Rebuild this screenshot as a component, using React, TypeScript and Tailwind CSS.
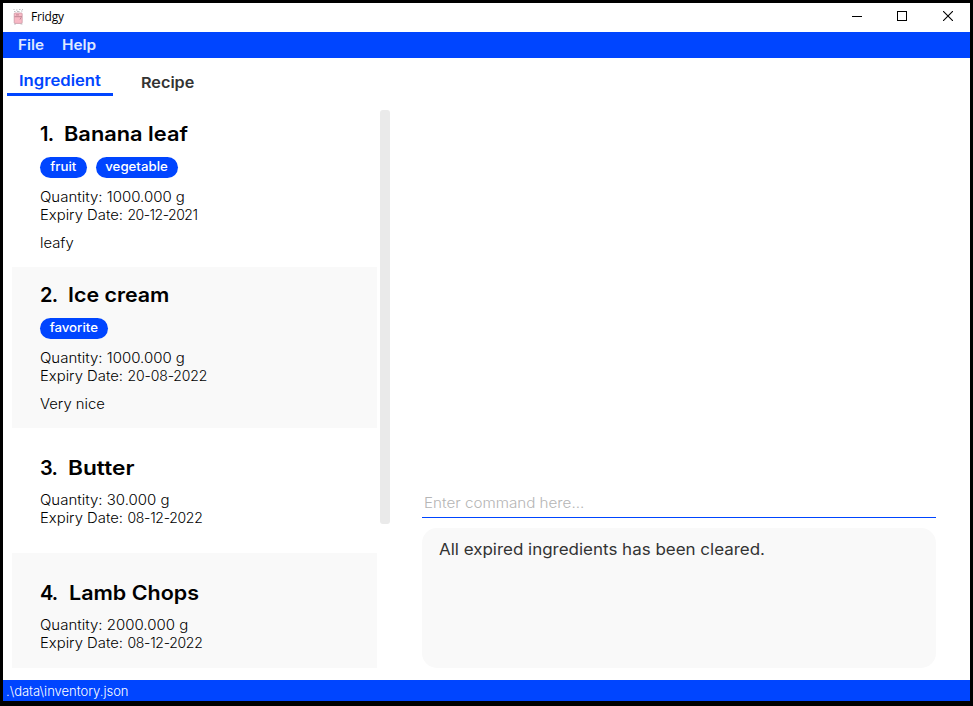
type Tag = { label: string; className: string };

type Item = {
  no: string;
  noClass: string;
  name: string;
  nameClass: string;
  tags: Tag[];
  quantity: string;
  expiry: string;
  expiryClass: string;
  note?: string;
};

const items: Item[] = [
  {
    no: "1.",
    noClass: "w-[24px]",
    name: "Banana leaf",
    nameClass: "scale-x-[1.09]",
    tags: [
      { label: "fruit", className: "w-[47px]" },
      { label: "vegetable", className: "w-[82px]" },
    ],
    quantity: "1000.000 g",
    expiry: "20-12-2021",
    expiryClass: "tracking-[-0.5px]",
    note: "leafy",
  },
  {
    no: "2.",
    noClass: "w-[28px]",
    name: "Ice cream",
    nameClass: "scale-x-[1.07]",
    tags: [{ label: "favorite", className: "w-[68px]" }],
    quantity: "1000.000 g",
    expiry: "20-08-2022",
    expiryClass: "tracking-[-0.13px]",
    note: "Very nice",
  },
  {
    no: "3.",
    noClass: "w-[28px]",
    name: "Butter",
    nameClass: "scale-x-[1.135]",
    tags: [],
    quantity: "30.000 g",
    expiry: "08-12-2022",
    expiryClass: "tracking-[-0.3px]",
  },
  {
    no: "4.",
    noClass: "w-[29px]",
    name: "Lamb Chops",
    nameClass: "scale-x-[1.075]",
    tags: [],
    quantity: "2000.000 g",
    expiry: "08-12-2022",
    expiryClass: "tracking-[-0.3px]",
  },
];

function FridgeIcon() {
  return (
    <svg className="mt-[6px] ml-[10px] h-4 w-[11px]" viewBox="0 0 11 16" fill="none">
      <path d="M0.5 0.5h1M3 1h1.5M6 0.5h1.5M9 0.5h1M1 2.5h1.5M4 2.5h2.5M8 2h1.5" stroke="#a9a9ad" strokeWidth="1" opacity="0.75" />
      <rect x="1.2" y="4" width="8" height="10.4" rx="0.8" fill="#f8b9c5" stroke="#c58f9d" strokeWidth="0.7" />
      <path d="M1.5 7.7h7.5M3 5.9h3M8 8.5l-1 2" stroke="#a8737f" strokeWidth="0.7" />
      <path d="M1 15h2M7.5 15h2" stroke="#b5b0b4" strokeWidth="0.8" />
    </svg>
  );
}

function TitleBar() {
  return (
    <header className="flex h-[29px] shrink-0 items-start pr-[17px]">
      <FridgeIcon />
      <span className="mt-[5px] ml-[7px] flex-1 font-['Open_Sans',sans-serif] text-[12px] leading-[18px] tracking-[-0.2px] text-black">Fridgy</span>
      <div className="mt-2 flex">
        <svg className="size-[10px]" viewBox="0 0 10 10" shapeRendering="crispEdges">
          <rect x="0" y="5" width="10" height="1" fill="#000" />
        </svg>
        <svg className="ml-[35px] size-[10px]" viewBox="0 0 10 10" fill="none" shapeRendering="crispEdges">
          <rect x="0.5" y="0.5" width="9" height="9" stroke="#000" />
        </svg>
        <svg className="ml-9 size-[10px]" viewBox="0 0 10 10" fill="none">
          <path d="M0 0L10 10M10 0L0 10" stroke="#000" strokeWidth="1.1" />
        </svg>
      </div>
    </header>
  );
}

function Card({ item, shaded }: { item: Item; shaded: boolean }) {
  const compact = item.tags.length === 0;
  return (
    <div
      className={`shrink-0 pl-7 ${shaded ? "bg-[#f9f9f9]" : "bg-white"} ${compact ? "h-[125px] pt-7" : "h-[161px] pt-4"}`}
    >
      <div className="flex text-[20px] leading-6 font-semibold whitespace-nowrap text-black">
        <span className={`tracking-[-0.8px] ${item.noClass}`}>{item.no}</span>
        <span className={`origin-left ${item.nameClass}`}>{item.name}</span>
      </div>
      {!compact && (
        <div className="mt-[11px] mb-2.5 flex gap-[9px]">
          {item.tags.map((t) => (
            <span
              key={t.label}
              className={`flex h-[21px] items-center justify-center rounded-full bg-[#0045ff] text-[12.5px] font-medium text-white ${t.className}`}
            >
              <span className="scale-x-[1.06]">{t.label}</span>
            </span>
          ))}
        </div>
      )}
      <div className={`text-[14px] leading-[18px] font-light whitespace-nowrap text-black ${compact ? "mt-[11px]" : ""}`}>
        <p className="w-fit origin-left scale-x-[1.07]">Quantity: {item.quantity}</p>
        <p className="flex">
          <span className="w-[87.5px]">
            <span className="block w-fit origin-left scale-x-[1.06]">Expiry Date:</span>
          </span>
          <span className={item.expiryClass}>{item.expiry}</span>
        </p>
        {item.note && <p className="mt-2.5 w-fit origin-left scale-x-[1.06]">{item.note}</p>}
      </div>
    </div>
  );
}

export default function App() {
  return (
    <div className="flex h-[706px] w-[973px] flex-col overflow-hidden border-[3px] border-b-[5px] border-black bg-white font-['Inter',sans-serif]">
      <TitleBar />
      <nav className="flex h-[26px] shrink-0 bg-[#0045ff] pl-[15px] text-[14px] leading-[25px] font-semibold text-[#dfe8ff]">
        <span className="w-11">
          <span className="block w-fit origin-left scale-x-[1.09]">File</span>
        </span>
        <span className="origin-left scale-x-[1.1]">Help</span>
      </nav>
      <div className="flex h-12 shrink-0 items-start pl-1 text-[15px] font-semibold">
        <div className="flex h-[38px] w-[106px] justify-center border-b-[3px] border-[#0045ff] pt-3 leading-[22px] text-[#0045ff]">
          <span className="scale-x-[1.11]">Ingredient</span>
        </div>
        <div className="ml-7 origin-left scale-x-[1.08] pt-[14px] leading-[22px] text-[#333333]">Recipe</div>
      </div>
      <main className="mb-3 flex h-[562px] shrink-0">
        <section className="ml-[9px] flex w-[365px] flex-col overflow-hidden">
          {items.map((item, i) => (
            <Card key={item.no} item={item} shaded={i % 2 === 1} />
          ))}
        </section>
        <div className="mt-1 ml-[3px] h-[414px] w-[10px] rounded-[3px] bg-[#eaeaea]" />
        <section className="ml-8 flex w-[514px] flex-col justify-end">
          <div className="mb-2.5 flex h-[30px] items-center border-b border-[#0045ff] pl-0.5 text-[14px] font-light text-[#b5b5b5]">
            <span className="origin-left scale-x-[1.085]">Enter command here...</span>
          </div>
          <div className="h-[140px] rounded-[15px] bg-[#f9f9f9] pt-[11px] pl-[17px] text-[16px] leading-5 text-[#333333]">
            <p className="w-fit origin-left scale-x-[1.06]">All expired ingredients has been cleared.</p>
          </div>
        </section>
      </main>
      <footer className="h-[21px] shrink-0 bg-[#0045ff] pl-[3px] text-[13px] leading-[22px] font-light text-white">
        .\data\inventory.json
      </footer>
    </div>
  );
}
